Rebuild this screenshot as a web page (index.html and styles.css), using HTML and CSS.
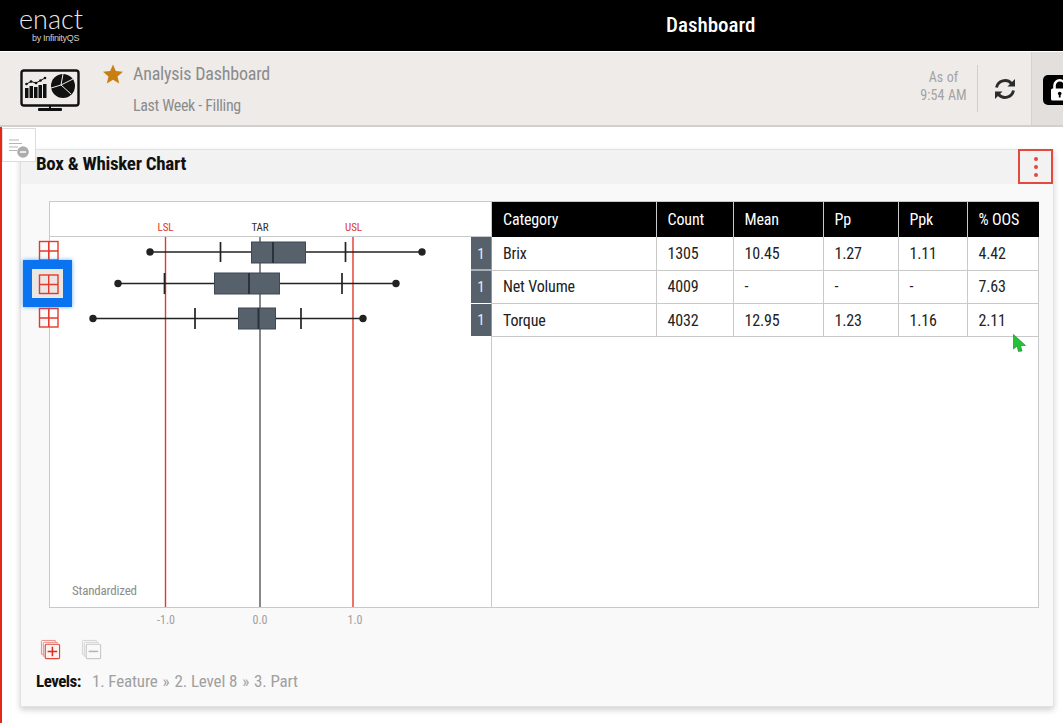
FILE: index.html
```html
<!DOCTYPE html>
<html lang="en">
<head>
<meta charset="utf-8">
<title>Dashboard</title>
<link rel="stylesheet" href="styles.css">
</head>
<body>
<header class="topbar">
  <div class="logo">
    <span class="logo-word">enact</span>
    <span class="logo-by">by InfinityQS</span>
  </div>
  <div class="page-title">Dashboard</div>
</header>
<section class="subbar">
  <svg class="dash-icon" viewBox="0 0 60 42" width="60" height="42">
    <rect x="1.500" y="1.500" width="57" height="35" rx="2.500" fill="none" stroke="#111" stroke-width="2.400"/>
    <rect x="18" y="39" width="24" height="3" rx="1" fill="#111"/>
    <rect x="29" y="36" width="2" height="3" fill="#111"/>
    <g fill="#111">
      <rect x="5" y="19" width="3.500" height="10"/><rect x="9.500" y="17" width="3.500" height="12"/><rect x="14" y="18" width="3.500" height="11"/><rect x="18.500" y="16" width="3.500" height="13"/><rect x="23" y="15" width="3.500" height="14"/>
      <circle cx="6.500" cy="15" r="1.300"/><circle cx="11" cy="12.500" r="1.300"/><circle cx="16" cy="14" r="1.300"/><circle cx="20.500" cy="11.500" r="1.300"/><circle cx="25" cy="9" r="1.300"/>
    </g>
    <path d="M6.500 15l4.500-2.500 5 1.500 4.500-2.500 4.500-2.500" fill="none" stroke="#111" stroke-width="1"/>
    <circle cx="43" cy="17" r="12" fill="#111"/>
    <path d="M43 5l-2 11-10 3M41 16l10 9M41 16l12-6" fill="none" stroke="#efebe9" stroke-width="1"/>
  </svg>
  <svg class="star" viewBox="0 0 20 20" width="20" height="20"><path d="M10 .5l2.800 6.600 7.200.6-5.500 4.700 1.700 7-6.200-3.700-6.200 3.700 1.700-7L0 7.700l7.200-.6z" fill="#c77f12"/></svg>
  <div class="titles">
    <div class="title-main">Analysis Dashboard</div>
    <div class="title-sub">Last Week - Filling</div>
  </div>
  <div class="asof">As of<br>9:54 AM</div>
  <div class="refresh">
    <svg viewBox="0 0 24 24" width="24" height="24" fill="none" stroke="#2b2b2b" stroke-width="2.900">
      <path d="M3.500 10.500A8.700 8.700 0 0 1 18.500 6.500"/><path d="M20.500 13.500A8.700 8.700 0 0 1 5.500 17.500"/>
      <path d="M22 2v7.500h-7.500z" fill="#2b2b2b" stroke="none"/><path d="M2 22v-7.500h7.500z" fill="#2b2b2b" stroke="none"/>
    </svg>
  </div>
  <div class="lock-cell">
    <div class="lock-btn">
      <svg viewBox="0 0 20 22" width="20" height="22">
        <path d="M4.500 10V6.500a5.200 5.200 0 0 1 10.400 0V10" fill="none" stroke="#fff" stroke-width="2.600"/>
        <rect x="1" y="9.500" width="18" height="12" rx="1.500" fill="#fff"/>
        <circle cx="9.700" cy="14.500" r="1.800" fill="#000"/><rect x="8.800" y="15" width="1.800" height="3.500" fill="#000"/>
      </svg>
    </div>
  </div>
</section>
<main class="content">
  <button class="side-toggle" type="button" aria-label="Toggle list">
    <svg viewBox="0 0 22 24" width="22" height="24" fill="none" stroke="#b5b5b5" stroke-width="1.200">
      <path d="M1 5h10M1 8.500h13M1 12h9M1 15.500h8"/>
      <circle cx="15" cy="17" r="5.800" fill="#adadad" stroke="none"/>
      <path d="M12 17h6" stroke="#fff" stroke-width="1.500"/>
    </svg>
  </button>
  <article class="card">
    <div class="card-head">
      <h2 class="card-title">Box &amp; Whisker Chart</h2>
      <button class="kebab" type="button" aria-label="Menu"><i></i><i></i><i></i></button>
    </div>
    <div class="card-body">
      <div class="chart-frame">
        <div class="plot">
          <svg class="plot-svg" viewBox="49 201 443 407" width="443" height="407">
            <line x1="49" y1="236.500" x2="491" y2="236.500" stroke="#c9c9c9" stroke-width="1"/>
            <line x1="260" y1="237" x2="260" y2="607" stroke="#555" stroke-width="1.400"/>
            <line x1="165.500" y1="237" x2="165.500" y2="607" stroke="#e03a2c" stroke-width="1.400"/>
            <line x1="353" y1="237" x2="353" y2="607" stroke="#e03a2c" stroke-width="1.400"/>
            <text class="lim" x="165.500" y="231" fill="#d9382c">LSL</text>
            <text class="lim" x="260" y="231" fill="#333">TAR</text>
            <text class="lim" x="353.500" y="231" fill="#d9382c">USL</text>

            <g class="bw">
              <line x1="150" y1="252" x2="422" y2="252"/><circle cx="150" cy="252" r="3.700"/><circle cx="422" cy="252" r="3.700"/>
              <line x1="220.500" y1="242" x2="220.500" y2="262"/><line x1="345.500" y1="242" x2="345.500" y2="262"/>
              <rect x="251.500" y="242" width="54" height="21"/><line class="med" x1="273" y1="242" x2="273" y2="263"/>
            </g>
            <g class="bw">
              <line x1="118" y1="283.500" x2="396" y2="283.500"/><circle cx="118" cy="283.500" r="3.700"/><circle cx="396" cy="283.500" r="3.700"/>
              <line x1="164.500" y1="273" x2="164.500" y2="294"/><line x1="342" y1="273" x2="342" y2="294"/>
              <rect x="214.500" y="273" width="65" height="21"/><line class="med" x1="249" y1="273" x2="249" y2="294"/>
            </g>
            <g class="bw">
              <line x1="93" y1="318.500" x2="363" y2="318.500"/><circle cx="93" cy="318.500" r="3.700"/><circle cx="363" cy="318.500" r="3.700"/>
              <line x1="195" y1="308" x2="195" y2="329"/><line x1="301" y1="308" x2="301" y2="329"/>
              <rect x="238.500" y="308" width="37" height="21"/><line class="med" x1="258.500" y1="308" x2="258.500" y2="329"/>
            </g>

            <g class="plus">
              <rect x="39.500" y="241.500" width="18.500" height="18.500"/><path d="M40 251h18M48.700 242v18"/>
              <rect x="39.500" y="308.500" width="18.500" height="18.500"/><path d="M40 318h18M48.700 309v18"/>
            </g>
            <rect class="focus-ring" x="27.500" y="264.500" width="40" height="38" />
            <g class="plus">
              <rect x="39.500" y="275" width="18.500" height="18.500"/><path d="M40 284.500h18M48.700 275v18"/>
            </g>

            <g class="tag"><rect x="471" y="237" width="20.500" height="32.500"/><text x="481" y="259">1</text></g>
            <g class="tag"><rect x="471" y="270.500" width="20.500" height="32.500"/><text x="481" y="292">1</text></g>
            <g class="tag"><rect x="471" y="304" width="20.500" height="32"/><text x="481" y="325">1</text></g>

            <text class="std" x="72" y="595">Standardized</text>
            <text class="tick" x="166" y="624">-1.0</text>
            <text class="tick" x="260" y="624">0.0</text>
            <text class="tick" x="355" y="624">1.0</text>
          </svg>
        </div>
        <table class="stats">
          <thead>
            <tr><th class="c1">Category</th><th class="c2">Count</th><th class="c3">Mean</th><th class="c4">Pp</th><th class="c5">Ppk</th><th class="c6">% OOS</th></tr>
          </thead>
          <tbody>
            <tr><td>Brix</td><td>1305</td><td>10.45</td><td>1.27</td><td>1.11</td><td>4.42</td></tr>
            <tr><td>Net Volume</td><td>4009</td><td>-</td><td>-</td><td>-</td><td>7.63</td></tr>
            <tr><td>Torque</td><td>4032</td><td>12.95</td><td>1.23</td><td>1.16</td><td>2.11</td></tr>
          </tbody>
        </table>
      </div>
      <div class="tools">
        <svg viewBox="0 0 22 22" width="21" height="21" fill="none" stroke="#e8867e" stroke-width="1">
          <path d="M16 3V1.500H2.500A1 1 0 0 0 1.500 2.500V16H3"/><path d="M18 4.500V3.500H4.500A1 1 0 0 0 3.500 4.500V18H5"/>
          <rect x="5.500" y="5.500" width="15" height="15" rx="1" stroke-width="1.200" stroke="#e0483c" fill="#fbf3f2"/>
          <path d="M8 13h10M13 8v10" stroke-width="1.600" stroke="#e0281c"/>
        </svg>
        <svg viewBox="0 0 22 22" width="21" height="21" fill="none" stroke="#d2d2d2" stroke-width="1">
          <path d="M16 3V1.500H2.500A1 1 0 0 0 1.500 2.500V16H3"/><path d="M18 4.500V3.500H4.500A1 1 0 0 0 3.500 4.500V18H5"/>
          <rect x="5.500" y="5.500" width="15" height="15" rx="1" stroke-width="1.200" stroke="#c9c9c9" fill="#f9f9f9"/>
          <path d="M8 13h10" stroke-width="1.600" stroke="#b5b5b5"/>
        </svg>
      </div>
      <div class="levels">
        <b>Levels:</b>
        <span>1. Feature</span><span class="sep">»</span><span>2. Level 8</span><span class="sep">»</span><span>3. Part</span>
      </div>
    </div>
  </article>
  <svg class="cursor" viewBox="0 0 13 18" width="13" height="18"><path d="M.5.500L12.500 11.500H7.500L9 17 5.500 17.500 4 12 .5 15z" fill="#22c435" stroke="#15782a" stroke-width=".6"/></svg>
</main>
</body>
</html>
```
FILE: styles.css
```css
* { box-sizing: border-box; }
html, body { margin: 0; height: 100%; }
body {
  width: 1063px;
  height: 723px;
  overflow: hidden;
  background: #fff;
  font-family: "Roboto", "Liberation Sans", sans-serif;
  font-stretch: 75%;
  color: #111;
  display: flex;
  flex-direction: column;
}
.topbar {
  height: 52px;
  flex: none;
  background: #000;
  border-bottom: 1px solid #fff;
  color: #fff;
  display: flex;
  align-items: flex-start;
}
.logo {
  width: 666px;
  padding: 5px 0 0 19px;
  display: flex;
  flex-direction: column;
  flex: none;
}
.logo-word {
  font-family: "Lato", sans-serif;
  font-weight: 300;
  font-size: 27px;
  line-height: 27px;
  color: #e8e8e8;
}
.logo-by {
  font-family: "Liberation Sans", sans-serif;
  font-size: 9px;
  line-height: 9px;
  letter-spacing: -.3px;
  margin: 2px 0 0 13px;
  color: #cfcfcf;
}
.page-title {
  font-size: 21px;
  font-weight: 500;
  line-height: 50px;
}
.subbar {
  height: 75px;
  flex: none;
  background: #efebe9;
  border-bottom: 2px solid #d2d0ce;
  display: flex;
  align-items: flex-start;
  padding-left: 20px;
}
.dash-icon { margin-top: 17px; flex: none; }
.star { margin: 12px 0 0 23px; flex: none; }
.titles { margin-left: 10px; flex: 1; }
.title-main {
  margin-top: 11px;
  font-size: 18px;
  line-height: 22px;
  color: #8b8b8b;
  letter-spacing: -.2px;
}
.title-sub {
  margin-top: 10px;
  font-size: 16px;
  line-height: 22px;
  color: #8b8b8b;
  letter-spacing: -.35px;
}
.asof {
  margin-top: 16px;
  padding-right: 10px;
  font-size: 14px;
  line-height: 18px;
  text-align: center;
  color: #a3a3a3;
  letter-spacing: .1px;
  flex: none;
  width: 57px;
}
.refresh {
  margin-top: 13px;
  height: 47px;
  width: 54px;
  border-left: 1px solid #cfcfcf;
  display: flex;
  align-items: center;
  justify-content: center;
}
.lock-cell {
  width: 32px;
  height: 73px;
  background: #e2dfdd;
  border-left: 1px solid #d5d3d1;
  padding: 23px 0 0 11px;
  overflow: hidden;
}
.lock-btn {
  width: 32px;
  height: 30px;
  background: #000;
  border-radius: 5px;
  padding: 4px 0 0 7px;
}
.lock-btn svg { display: block; }
.content {
  position: relative;
  flex: 1;
  border-left: 2px solid #e22a1c;
  padding: 22px 9px 16px 18px;
  display: flex;
  min-height: 0;
}
.side-toggle {
  position: absolute;
  left: 0;
  top: 1px;
  width: 34px;
  height: 34px;
  padding: 4px 0 0 5px;
  background: #fff;
  border: 1px solid #dcdcdc;
  display: block;
}
.side-toggle svg { display: block; }
.card {
  flex: 1;
  background: #f9f9f9;
  border: 1px solid #e2e2e2;
  box-shadow: 0 3px 6px rgba(0,0,0,.18);
  display: flex;
  flex-direction: column;
  min-width: 0;
}
.card-head {
  height: 34px;
  flex: none;
  background: #f2f2f2;
  display: flex;
  align-items: center;
  justify-content: space-between;
  padding-left: 15px;
}
.card-title {
  margin: 0;
  font-size: 19px;
  font-stretch: 75%;
  font-weight: 700;
  color: #111;
  letter-spacing: -.3px;
  position: relative;
  top: -4px;
}
.kebab {
  width: 35px;
  height: 35px;
  margin: -1px 0 0;
  align-self: flex-start;
  padding: 0;
  background: transparent;
  border: 2px solid #e4493d;
  display: flex;
  flex-direction: column;
  align-items: center;
  justify-content: center;
  gap: 4px;
}
.kebab i {
  display: block;
  width: 4px;
  height: 4px;
  border-radius: 50%;
  background: #e4493d;
}
.card-body {
  flex: 1;
  padding: 17px 14px 0 28px;
  display: flex;
  flex-direction: column;
  min-height: 0;
}
.chart-frame {
  height: 407px;
  flex: none;
  display: flex;
  background: #fff;
  border: 1px solid #c9c9c9;
}
.plot {
  width: 442px;
  flex: none;
  border-right: 1px solid #c9c9c9;
}
.plot-svg {
  display: block;
  overflow: visible;
  margin: -1px 0 0 -1px;
  font-family: "Roboto", "Liberation Sans", sans-serif;
  font-stretch: 75%;
}
.plot-svg text { text-anchor: middle; }
.lim { font-size: 11px; letter-spacing: -.1px; }
.std { font-size: 13px; fill: #8c8c8c; text-anchor: start !important; letter-spacing: -.2px; }
.tick { font-size: 12px; fill: #a0a0a0; }
.bw line { stroke: #222; stroke-width: 1.700; }
.bw circle { fill: #222; }
.bw rect { fill: #56616c; stroke: #3f4954; stroke-width: 1; }
.bw .med { stroke: #2a323a; stroke-width: 2; }
.plus rect, .plus path { fill: none; stroke: #e6392c; stroke-width: 1.400; }
.focus-ring {
  fill: #e9e6e4;
  stroke: #0a74f0;
  stroke-width: 9;
  filter: drop-shadow(0 0 2px rgba(10,116,240,.6));
}
.tag rect { fill: #56616c; }
.tag text { fill: #e9ecee; font-size: 15px; }
.stats {
  border-collapse: collapse;
  table-layout: fixed;
  width: 547px;
  height: 135px;
  flex: none;
  font-size: 16px;
  font-stretch: 75%;
  letter-spacing: -.15px;
  color: #222;
}
.stats th {
  background: #000;
  color: #fff;
  height: 35px;
  font-weight: 400;
  text-align: left;
  padding: 0 0 0 11px;
  border-right: 1px solid #c9c9c9;
}
.stats td {
  height: 33.300px;
  padding: 0 0 0 11px;
  border: 1px solid #c9c9c9;
  border-top: 0;
}
.stats td:first-child { border-left: 0; }
.stats td:last-child, .stats th:last-child { border-right: 0; }
.c1 { width: 164px; }
.c2 { width: 77px; }
.c3 { width: 90px; }
.c4 { width: 75px; }
.c5 { width: 69px; }
.c6 { width: 72px; }
.tools {
  display: flex;
  gap: 20px;
  padding-top: 31px;
  margin-left: -9px;
}
.levels {
  margin: 10px 0 0 -13px;
  display: flex;
  gap: 5px;
  font-size: 17px;
  line-height: 22px;
  color: #a0a0a0;
  letter-spacing: -.15px;
}
.levels b { color: #111; margin-right: 6px; font-weight: 700; letter-spacing: -.5px; }
.cursor {
  position: absolute;
  left: 1011px;
  top: 207px;
}
```
